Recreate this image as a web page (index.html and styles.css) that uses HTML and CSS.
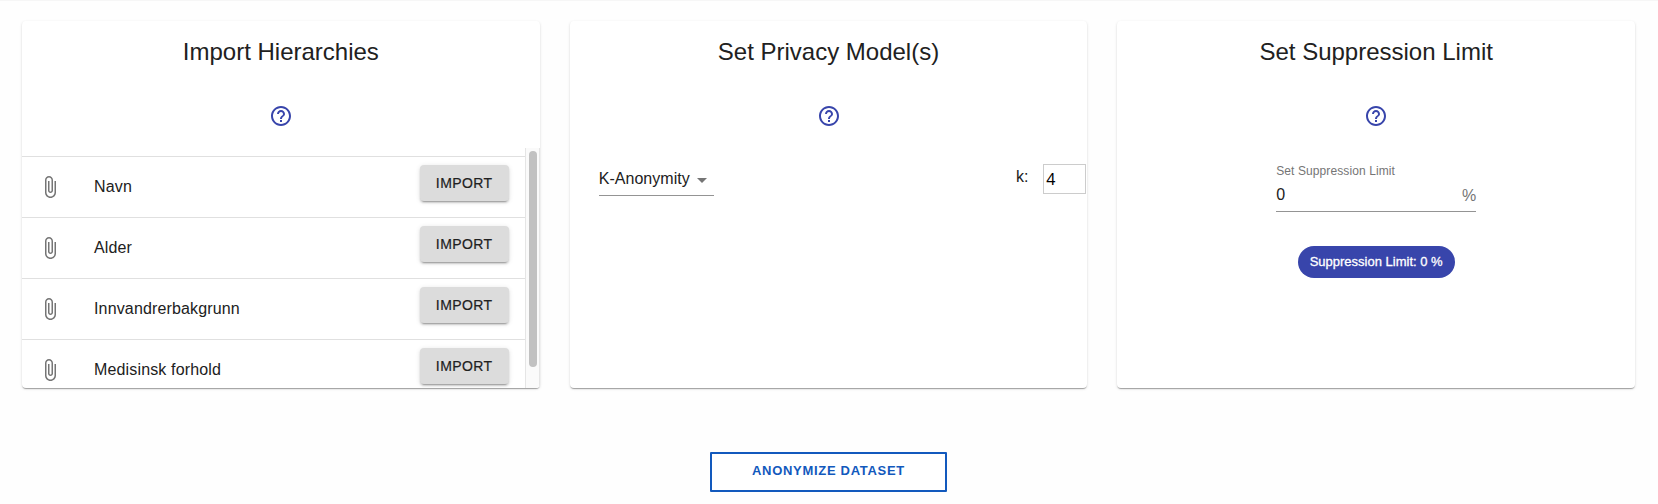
FILE: index.html
```html
<!DOCTYPE html>
<html lang="en">
<head>
<meta charset="utf-8">
<title>Anonymize dataset</title>
<link rel="stylesheet" href="styles.css">
</head>
<body>
<svg width="0" height="0" class="sprite" aria-hidden="true">
  <symbol id="help" viewBox="0 0 24 24"><path d="M11 18h2v-2h-2v2zm1-16C6.48 2 2 6.48 2 12s4.480 10 10 10 10-4.480 10-10S17.520 2 12 2zm0 18c-4.410 0-8-3.590-8-8s3.590-8 8-8 8 3.590 8 8-3.590 8-8 8zm0-14c-2.210 0-4 1.790-4 4h2c0-1.100.9-2 2-2s2 .9 2 2c0 2-3 1.750-3 5h2c0-2.250 3-2.500 3-5 0-2.210-1.790-4-4-4z"/></symbol>
  <symbol id="clip" viewBox="0 0 24 24"><path d="M16.500 6v11.500c0 2.210-1.790 4-4 4s-4-1.790-4-4V5c0-1.380 1.120-2.500 2.500-2.500s2.500 1.120 2.500 2.500v10.500c0 .55-.45 1-1 1s-1-.45-1-1V6H10v9.500c0 1.380 1.120 2.500 2.500 2.500s2.500-1.120 2.500-2.500V5c0-2.210-1.790-4-4-4S7 2.790 7 5v12.500c0 3.040 2.460 5.500 5.500 5.500s5.500-2.460 5.500-5.500V6h-1.500z"/></symbol>
</svg>
<main class="page">
  <div class="cards">
    <section class="card">
      <h2 class="title">Import Hierarchies</h2>
      <svg class="help"><use href="#help"/></svg>
      <div class="scroller">
        <ul class="list">
          <li class="row"><svg class="clip"><use href="#clip"/></svg><span class="name">Navn</span><button class="import">IMPORT</button></li>
          <li class="row"><svg class="clip"><use href="#clip"/></svg><span class="name">Alder</span><button class="import">IMPORT</button></li>
          <li class="row"><svg class="clip"><use href="#clip"/></svg><span class="name">Innvandrerbakgrunn</span><button class="import">IMPORT</button></li>
          <li class="row"><svg class="clip"><use href="#clip"/></svg><span class="name">Medisinsk forhold</span><button class="import">IMPORT</button></li>
        </ul>
        <div class="track"><div class="thumb"></div></div>
      </div>
    </section>
    <section class="card">
      <h2 class="title">Set Privacy Model(s)</h2>
      <svg class="help"><use href="#help"/></svg>
      <div class="model">
        <div class="select"><span class="select-text">K-Anonymity</span><svg class="arrow" viewBox="0 0 24 24"><path d="M7 10l5 5 5-5z"/></svg></div>
        <span class="k-label">k:</span>
        <div class="k-input">4</div>
      </div>
    </section>
    <section class="card">
      <h2 class="title">Set Suppression Limit</h2>
      <svg class="help"><use href="#help"/></svg>
      <div class="field">
        <span class="field-label">Set Suppression Limit</span>
        <div class="field-input"><span>0</span><span class="percent">%</span></div>
      </div>
      <div class="chip"><span class="chip-text">Suppression Limit: 0 %</span></div>
    </section>
  </div>
  <button class="anonymize">ANONYMIZE DATASET</button>
</main>
</body>
</html>
```
FILE: styles.css
```css
* { box-sizing: border-box; }
body {
  margin: 0;
  background: #fefefe;
  color: #212121;
  font: 16px/24px "Liberation Sans", Arial, sans-serif;
}
.sprite { display: block; }
.page {
  height: 504px;
  border-top: 1px solid #f6f6f6;
  padding: 20px 23px 0 22px;
  display: flex;
  flex-direction: column;
  align-items: center;
  overflow: hidden;
}
.cards {
  width: 100%;
  display: grid;
  grid-template-columns: repeat(3, 1fr);
  gap: 30px;
}
.card {
  height: 367px;
  background: #fff;
  border-radius: 4px;
  box-shadow: 0 2px 1px -1px rgba(0,0,0,.2), 0 1px 1px 0 rgba(0,0,0,.14), 0 1px 3px 0 rgba(0,0,0,.12);
  display: flex;
  flex-direction: column;
  align-items: center;
  overflow: hidden;
}
.title {
  margin: 15px 0 36px;
  font-size: 24px;
  font-weight: 400;
  line-height: 32px;
  white-space: nowrap;
}
.help { width: 24px; height: 24px; margin-left: .3px; fill: #3845ab; flex: none; }
.scroller {
  width: 100%;
  height: 240px;
  margin-top: 20px;
  display: flex;
  overflow: hidden;
}
.list { flex: 1; margin: 0; padding: 8px 0 0; list-style: none; }
.row {
  height: 61px;
  border-top: 1px solid #e0e0e0;
  padding: 0 16px;
  display: flex;
  align-items: center;
}
.clip { width: 24px; height: 24px; fill: #757575; margin-right: 32px; }
.name { flex: 1; letter-spacing: .15px; }
.import {
  width: 89px;
  height: 36px;
  margin-bottom: 8px;
  padding: 0;
  border: 0;
  border-radius: 4px;
  background: #dcdcdc;
  color: #212121;
  font: 14px/24px "Liberation Sans", Arial, sans-serif;
  letter-spacing: .4px;
  -webkit-text-stroke: .2px #212121;
  box-shadow: 0 3px 1px -2px rgba(0,0,0,.2), 0 2px 2px 0 rgba(0,0,0,.14), 0 1px 5px 0 rgba(0,0,0,.12);
}
.track {
  width: 15px;
  background: #fafafa;
  border: solid #e5e5e5;
  border-width: 0 1px;
  padding: 3px 2px 0 3px;
}
.thumb { width: 8px; height: 216px; border-radius: 4px; background: #c1c1c1; }
.model {
  width: 100%;
  padding: 36px 1px 0 29px;
  display: flex;
  align-items: flex-start;
}
.select {
  width: 115px;
  height: 32px;
  border-bottom: 1px solid #949494;
  display: flex;
  align-items: flex-start;
  justify-content: space-between;
  margin-right: auto;
}
.select-text { padding-top: 3px; letter-spacing: .05px; white-space: nowrap; }
.arrow { width: 24px; height: 24px; margin: 4px 0 0; fill: #757575; flex: none; }
.k-label { margin-right: 15px; padding-top: 1px; }
.k-input {
  width: 43px;
  height: 30px;
  border: 1px solid #ccc;
  padding: 2px 3px 0 2px;
  color: #000;
  font: 16px/24px "Noto Sans", sans-serif;
}
.field { width: 200px; margin-top: 35px; }
.field-label { display: block; font-size: 12px; line-height: 16px; letter-spacing: .1px; color: #757575; }
.field-input {
  height: 33px;
  border-bottom: 1px solid #949494;
  padding-top: 4px;
  display: flex;
  justify-content: space-between;
}
.percent { color: #757575; padding-top: 1px; }
.chip {
  width: 157px;
  height: 32px;
  margin-top: 34px;
  border-radius: 16px;
  background: #3845ab;
  color: #fff;
  font-size: 13px;
  line-height: 31px;
  text-align: center;
  white-space: nowrap;
  -webkit-text-stroke: .3px #fff;
}
.anonymize {
  width: 237px;
  height: 40px;
  margin-top: 64px;
  padding: 0 0 2px;
  border: 2px solid #1259bd;
  border-radius: 1px;
  background: #fff;
  color: #1259bd;
  font: 700 13px/20px "Liberation Sans", Arial, sans-serif;
  letter-spacing: .7px;
}
```
